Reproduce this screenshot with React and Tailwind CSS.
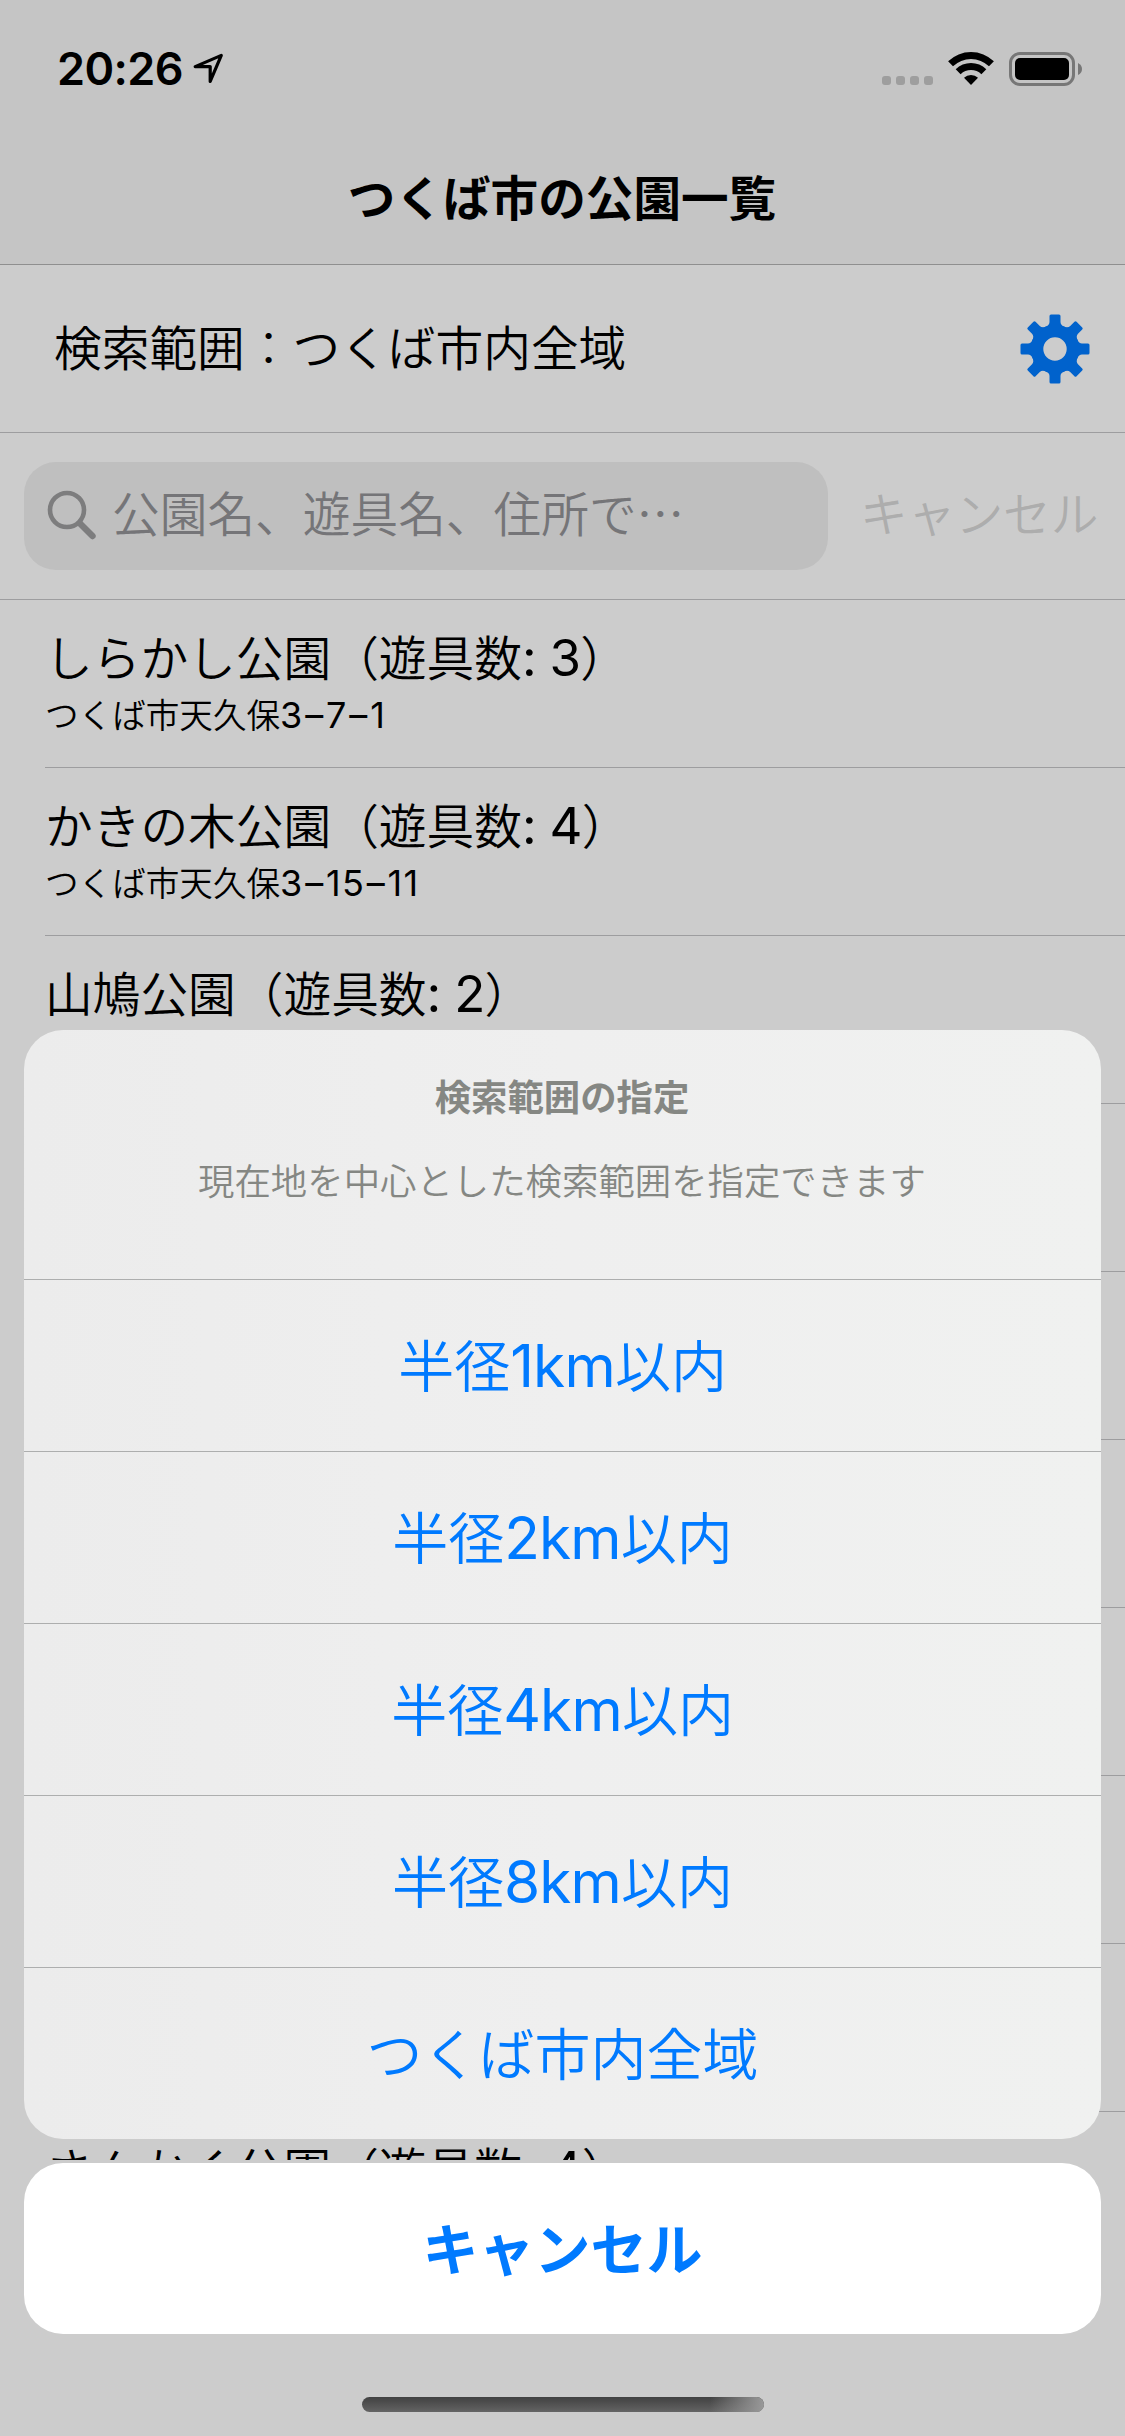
const cjk = "font-['Noto_Sans_CJK_JP',sans-serif]";

/* Sets Latin runs slightly larger than the kana and kanji around them. */
function Mixed({ text, latin, dash = "" }) {
  return text.split(/([A-Za-z0-9: ]+|–)/).map((run, i) =>
    i % 2 ? (
      <span
        key={i}
        className={`font-['Inter','Noto_Sans_CJK_JP',sans-serif] font-normal ${latin} ${run === "–" ? dash : ""}`}
      >
        {run}
      </span>
    ) : (
      run
    )
  );
}

function StatusBar() {
  return (
    <div className="flex h-[132px] items-start justify-between pr-[42px] pl-[57px]">
      <div className="flex items-start pt-[42px]">
        <span className="w-[128px] font-['Inter',sans-serif] text-[45px] leading-[54px] font-semibold tracking-[-0.6px] whitespace-nowrap">
          20:26
        </span>
        <svg className="mt-[10px] ml-[7px]" width="34" height="34" viewBox="0 0 34 34" fill="none">
          <path
            d="M29.3 3.4 3.2 14.6H18.2V29.4Z"
            stroke="#000"
            strokeWidth="3.2"
            strokeLinejoin="round"
          />
        </svg>
      </div>
      <div className="flex items-start pt-[52px]">
        <div className="flex gap-[5px] pt-[24px]">
          {[0, 1, 2, 3].map((i) => (
            <div key={i} className="size-[9px] rounded-[3px] bg-[#9e9e9e]" />
          ))}
        </div>
        <svg className="ml-[14px]" width="48" height="34" viewBox="0 0 48 34">
          <path d="M1.1 9.3A33 33 0 0 1 46.9 9.3L42 14.3A26 26 0 0 0 6 14.3Z" />
          <path d="M8.7 17.2A22 22 0 0 1 39.3 17.2L34.4 22.2A15 15 0 0 0 13.6 22.2Z" />
          <path d="M17 25.8A10 10 0 0 1 31 25.8L24 33Z" />
        </svg>
        <svg className="ml-[14px]" width="74" height="34" viewBox="0 0 74 34">
          <rect x="1.5" y="1.5" width="63" height="31" rx="9.5" fill="none" stroke="#777" strokeWidth="3" />
          <rect x="6" y="6" width="54" height="22" rx="5" />
          <path d="M69 11Q73 13 73 17T69 23Z" fill="#777" />
        </svg>
      </div>
    </div>
  );
}

function Gear() {
  return (
    <svg width="70" height="70" viewBox="-35 -35 70 70" fill="#0062cc">
      <circle r="18" fill="none" stroke="#0062cc" strokeWidth="12.6" />
      {[0, 45, 90, 135, 180, 225, 270, 315].map((a) => (
        <path
          key={a}
          transform={`rotate(${a})`}
          d="M-9.5-22Q-5.5-24-5.5-27V-33Q-5.5-34.5-4-34.5H4Q5.5-34.5 5.5-33V-27Q5.5-24 9.5-22Z"
        />
      ))}
    </svg>
  );
}

const parks = [
  { name: "しらかし公園（遊具数: 3）", address: "つくば市天久保3–7–1" },
  { name: "かきの木公園（遊具数: 4）", address: "つくば市天久保3–15–11" },
  { name: "山鳩公園（遊具数: 2）" },
  {},
  {},
  {},
  {},
  {},
  {},
  { name: "さんかく公園（遊具数: 4）" },
];

function ParkRow({ name, address }) {
  return (
    <div className="ml-[45px] h-[168px] shrink-0 border-b border-[#9d9d9f] pt-[22px] whitespace-nowrap">
      {name && (
        <div className="h-[70px] text-[47.7px] leading-[68px]">
          <Mixed text={name} latin="text-[51px] tracking-[-0.7px]" />
        </div>
      )}
      {address && (
        <div className="h-[44px] text-[33.6px] leading-[44px]">
          <Mixed text={address} latin="text-[36px] tracking-[1.2px]" dash="mx-[1.7px]" />
        </div>
      )}
    </div>
  );
}

const options = ["半径1km以内", "半径2km以内", "半径4km以内", "半径8km以内", "つくば市内全域"];

export default function App() {
  return (
    <div className={`relative h-[2436px] w-[1125px] overflow-hidden bg-[#ccc] font-[350] text-black ${cjk}`}>
      <header className="h-[265px] border-b border-[#8f8f8f] bg-[#c5c5c5]">
        <StatusBar />
        <h1 className="h-[132px] pr-[1px] text-center text-[47.6px] leading-[128px] font-bold">つくば市の公園一覧</h1>
      </header>

      <div className="flex h-[168px] items-center justify-between border-b border-[#9d9d9f] pr-[35px] pl-[54px]">
        <span className="pb-[5px] text-[47.7px] leading-[68px]">
          検索範囲<span className="font-light">：</span>つくば市内全域
        </span>
        <Gear />
      </div>

      <div className="flex h-[167px] items-center border-b border-[#9d9d9f] pl-[24px]">
        <div className="flex h-[108px] w-[804px] items-center rounded-[32px] bg-[#bfbfbf] pl-[22px] text-[#757578]">
          <svg width="52" height="52" viewBox="0 0 52 52" fill="none" stroke="#7d7d7e" strokeLinecap="round">
            <circle cx="21" cy="20" r="17" strokeWidth="4.6" />
            <path d="M34 33.500 46.500 46" strokeWidth="6.400" />
          </svg>
          <span className="ml-[14px] pb-[8px] text-[47.7px] leading-[68px]">公園名、遊具名、住所で…</span>
        </div>
        <span className="ml-[32px] pb-[8px] text-[47.7px] leading-[68px] text-[#adadad]">キャンセル</span>
      </div>

      <div className="flex h-[1560px] flex-col overflow-hidden">
        {parks.map((p, i) => (
          <ParkRow key={i} {...p} />
        ))}
      </div>

      <div className="absolute inset-x-[24px] bottom-[24px] flex flex-col items-center text-center">
        <div className="w-full overflow-hidden rounded-[39px] bg-linear-to-r from-[#ececec] via-[#efefef] to-[#f0f1f0]">
          <div className="h-[250px] border-b border-[#adaeae] pt-[41px] pr-[1px] text-[36.4px] leading-[48px] text-[#858783]">
            <div className="font-bold">検索範囲の指定</div>
            <div className="mt-[36px]">現在地を中心とした検索範囲を指定できます</div>
          </div>
          {options.map((o) => (
            <div
              key={o}
              className="h-[172px] border-b border-[#adaeae] text-[56px] leading-[166px] text-[#007aff] last:h-[171px] last:border-b-0"
            >
              <Mixed text={o} latin="text-[58.5px] tracking-[-0.8px]" />
            </div>
          ))}
        </div>
        <div className="mt-[24px] h-[171px] w-full rounded-[39px] bg-white text-[56px] leading-[166px] font-bold text-[#007aff]">
          キャンセル
        </div>
        <div className="mt-[63px] h-[15px] w-[402px] overflow-hidden rounded-full bg-linear-to-b from-[#414141] to-[#646464]">
          <div className="ml-auto h-full w-[54px] bg-linear-to-r from-[#999]/0 to-[#999]" />
        </div>
      </div>
    </div>
  );
}
